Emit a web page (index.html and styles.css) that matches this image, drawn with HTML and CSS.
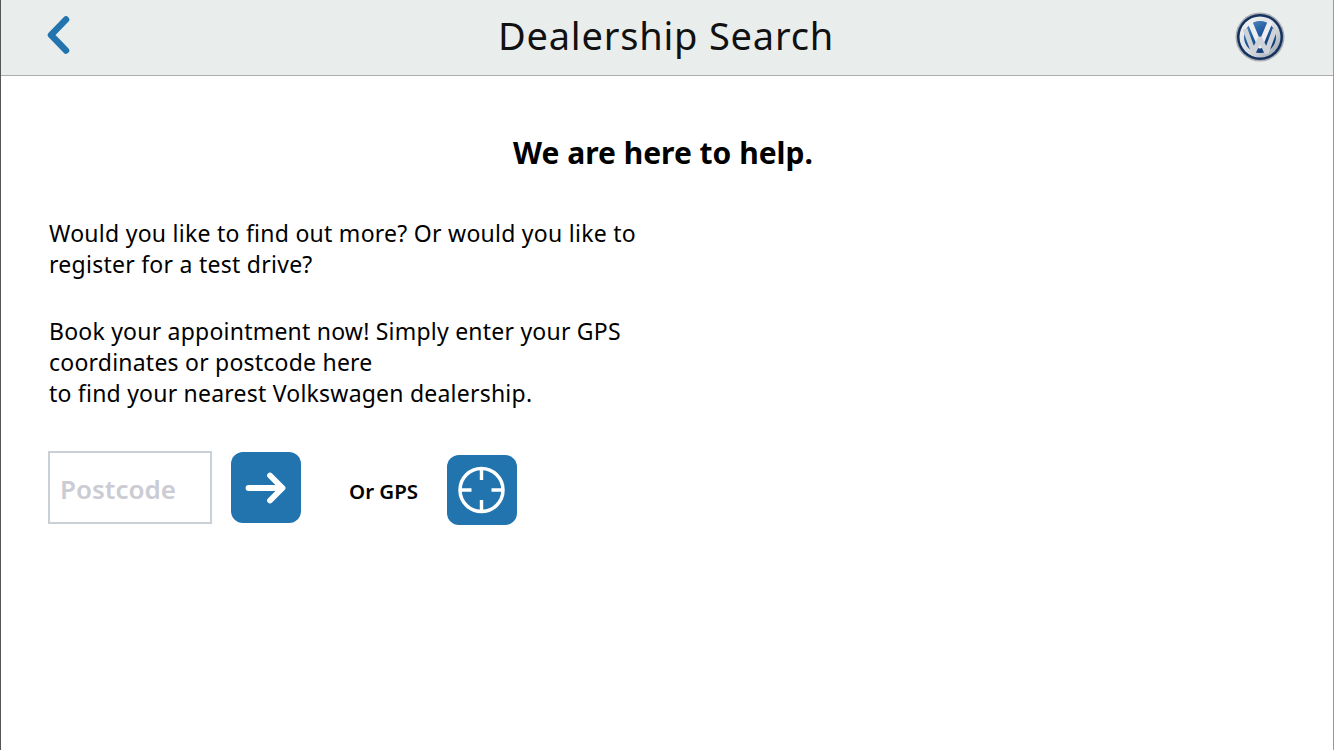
FILE: index.html
```html
<!DOCTYPE html>
<html lang="en">
<head>
<meta charset="utf-8">
<title>Dealership Search</title>
<link rel="stylesheet" href="styles.css">
</head>
<body>
<div class="screen">
  <header class="topbar">
    <svg class="back" width="26" height="40" viewBox="0 0 26 40" aria-hidden="true"><path d="M21 4.500 6 20l15 15.500" fill="none" stroke="#2274ae" stroke-width="6.500" stroke-linecap="round" stroke-linejoin="round"/></svg>
    <h1 class="title">Dealership Search</h1>
    <svg class="logo" width="50" height="50" viewBox="0 0 50 50" aria-hidden="true">
      <defs>
        <linearGradient id="blue" x1="0" y1="0" x2="0.600" y2="1"><stop offset="0" stop-color="#5b8fc4"/><stop offset="0.500" stop-color="#1f5a9e"/><stop offset="1" stop-color="#123a78"/></linearGradient>
        <linearGradient id="silver" x1="0" y1="0" x2="1" y2="1"><stop offset="0" stop-color="#f4f5f6"/><stop offset="0.600" stop-color="#d5d9de"/><stop offset="1" stop-color="#8f98a3"/></linearGradient>
        <clipPath id="inner"><circle cx="25" cy="25" r="19"/></clipPath>
      </defs>
      <circle cx="25" cy="25" r="24.500" fill="#a9adb2"/>
      <circle cx="25" cy="25" r="23" fill="#14315f"/>
      <circle cx="25" cy="25" r="20.500" fill="url(#silver)"/>
      <circle cx="25" cy="25" r="16" fill="url(#blue)"/>
      <g clip-path="url(#inner)">
        <path d="M14 8 25 34 36 8" fill="none" stroke="#eceef0" stroke-width="5" stroke-linejoin="round"/>
        <path d="M10 17 18.500 40 25 27 31.500 40 40 17" fill="none" stroke="#cfd3d8" stroke-width="5" stroke-linejoin="round"/>
      </g>
    </svg>
  </header>
  <main class="content">
    <h2 class="heading">We are here to help.</h2>
    <p class="copy">Would you like to find out more? Or would you like to<br>register for a test drive?</p>
    <p class="copy copy-last">Book your appointment now! Simply enter your GPS<br>coordinates or postcode here<br>to find your nearest Volkswagen dealership.</p>
    <form class="search">
      <input class="postcode" type="text" placeholder="Postcode">
      <button class="tile tile-go" type="button" aria-label="Search">
        <svg width="70" height="71" viewBox="0 0 70 71" aria-hidden="true"><path d="M17.500 36H51M39 23.500 51.500 36 39 48.500" fill="none" stroke="#fff" stroke-width="5.800" stroke-linecap="round" stroke-linejoin="round"/></svg>
      </button>
      <span class="or">Or GPS</span>
      <button class="tile tile-gps" type="button" aria-label="Use GPS">
        <svg width="70" height="70" viewBox="0 0 70 70" aria-hidden="true"><g fill="none" stroke="#fff"><circle cx="34.500" cy="35" r="21.500" stroke-width="3.500"/><path d="M34.500 14V25M34.500 45V56M13.500 35H24.500M44.500 35H55.500" stroke-width="3.400"/></g></svg>
      </button>
    </form>
  </main>
</div>
</body>
</html>
```
FILE: styles.css
```css
* { box-sizing: border-box; }
html, body { margin: 0; height: 100%; background: #fff; }
body { font-family: "Noto Sans", "Open Sans", sans-serif; color: #000; overflow: hidden; }
.screen { width: 1334px; height: 750px; border-left: 1px solid #555; border-right: 1px solid #999; display: flex; flex-direction: column; }
.topbar { height: 76px; flex: none; background: #e9edec; border-bottom: 1px solid #adadad; display: flex; align-items: center; padding: 0 48px 6px 44px; }
.back { flex: none; }
.title { margin: 0; flex: 1; padding-left: 26px; font-size: 38px; font-weight: 400; letter-spacing: 0.8px; color: #111; line-height: 1; text-align: center; }
.logo { flex: none; margin-top: 5px; }
.content { padding: 57px 48px 0; }
.heading { margin: 0 0 45px; padding-right: 8px; text-align: center; font-size: 30px; line-height: 40px; font-weight: 700; }
.copy { margin: 0 0 36px; font-size: 23px; line-height: 31px; letter-spacing: 0.26px; }
.copy-last { margin-bottom: 0; letter-spacing: 0.22px; }
.search { display: flex; align-items: flex-start; margin: 42px 0 0 -1px; }
.postcode { width: 164px; height: 73px; border: 2px solid #c9d0d6; background: #fff; padding: 2px 0 0 10px; font: 600 26px "Noto Sans", sans-serif; outline: none; border-radius: 0; }
.postcode::placeholder { color: #cbccd3; opacity: 1; }
.tile { width: 70px; height: 70px; padding: 0; border: 0; border-radius: 12px; background: #2274ae; display: block; }
.tile svg { display: block; }
.tile-go { height: 71px; margin: 1px 0 0 19px; }
.tile-gps { margin-top: 4px; }
.or { margin: 25px 29px 0 48px; font-size: 20.500px; line-height: 30px; font-weight: 600; white-space: nowrap; }
```
